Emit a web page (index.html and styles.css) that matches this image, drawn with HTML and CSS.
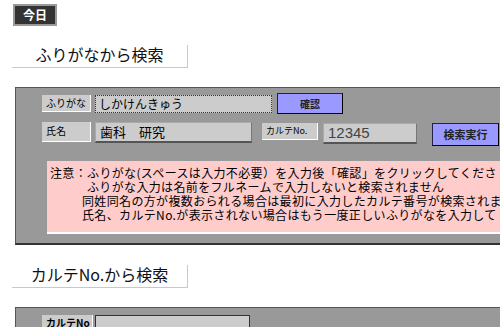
FILE: index.html
```html
<!DOCTYPE html>
<html lang="ja">
<head>
<meta charset="utf-8">
<link rel="stylesheet" href="styles.css">
</head>
<body>
<div class="today">今日</div>

<div class="section-head">ふりがなから検索</div>

<div class="panel">
  <div class="row row1">
    <div class="label l-kana">ふりがな</div>
    <div class="input in-kana">しかけんきゅう</div>
    <div class="btn btn-confirm">確認</div>
  </div>
  <div class="row row2">
    <div class="label l-name">氏名</div>
    <div class="input in-name">歯科　研究</div>
    <div class="label l-no">カルテNo.</div>
    <div class="input in-no">12345</div>
    <div class="btn btn-search">検索実行</div>
  </div>
  <div class="notice">
    <div class="nline">注意：ふりがな(スペースは入力不必要）を入力後「確認」をクリックしてくださ</div>
    <div class="nline ind2">ふりがな入力は名前をフルネームで入力しないと検索されません</div>
    <div class="nline ind">同姓同名の方が複数おられる場合は最初に入力したカルテ番号が検索されま</div>
    <div class="nline ind">氏名、カルテNo.が表示されない場合はもう一度正しいふりがなを入力して</div>
  </div>
</div>

<div class="section-head head2">カルテNo.から検索</div>

<div class="panel panel2">
  <div class="row">
    <div class="label l-no2">カルテNo</div>
    <div class="input in-no2"></div>
  </div>
</div>
</body>
</html>
```

FILE: styles.css
```css
html, body {
  margin: 0;
  padding: 0;
  overflow: hidden;
  background: #ffffff;
  font-family: "Noto Sans CJK JP", "Liberation Sans", sans-serif;
  color: #000;
}
body {
  width: 500px;
  height: 327px;
}
.today {
  margin: 4px 0 0 13px;
  width: 40px;
  height: 18px;
  background: #333333;
  border: 2px solid #999999;
  color: #ffffff;
  font-size: 12px;
  font-weight: bold;
  line-height: 18px;
  text-align: center;
  box-sizing: content-box;
}
.section-head {
  margin: 19px 0 0 12px;
  width: 175px;
  height: 22px;
  border-right: 1px solid #c8c8c8;
  border-bottom: 1px solid #c8c8c8;
  font-size: 16px;
  line-height: 18px;
  text-align: center;
  color: #111;
}
.panel {
  margin: 19px 0 0 15px;
  width: 458px;
  height: 150px;
  background: #999999;
  border-top: 1px solid #555555;
  border-left: 1px solid #555555;
  border-bottom: 2px solid #333333;
  padding: 5px 0 0 26px;
  box-sizing: content-box;
}
.row {
  display: flex;
  align-items: flex-start;
}
.label {
  background: #cccccc;
  border-bottom: 1px solid #ffffff;
  border-right: 1px solid #ffffff;
  font-size: 10px;
  padding-left: 4px;
  box-sizing: border-box;
}
.input {
  background: #cccccc;
  box-sizing: border-box;
  padding-left: 4px;
}
.row1 {
  height: 29px;
}
.l-kana {
  margin-top: 2px;
  width: 49px;
  height: 17px;
  line-height: 16px;
}
.in-kana {
  margin-top: 2px;
  margin-left: 4px;
  width: 177px;
  height: 18px;
  border: 1px dotted #333333;
  font-size: 12px;
  line-height: 16px;
  padding-left: 3px;
}
.btn {
  background: #9999ff;
  border: 1px solid #222244;
  border-right-color: #000;
  border-bottom-color: #000;
  box-sizing: border-box;
  text-align: center;
  font-size: 11px;
  font-weight: bold;
  color: #222;
}
.btn-confirm {
  margin-left: 5px;
  width: 66px;
  height: 21px;
  line-height: 19px;
  font-size: 10px;
}
.row2 {
  height: 24px;
}
.l-name {
  width: 49px;
  height: 20px;
  line-height: 18px;
}
.in-name {
  margin-left: 4px;
  width: 157px;
  height: 21px;
  border-top: 1px solid #aaaaaa;
  border-left: 1px solid #aaaaaa;
  border-bottom: 2px solid #555555;
  border-right: 1px solid #777777;
  font-size: 13px;
  line-height: 18px;
}
.l-no {
  margin-left: 10px;
  margin-top: 1px;
  width: 56px;
  height: 17px;
  line-height: 16px;
  font-size: 9px;
}
.in-no {
  margin-left: 5px;
  margin-top: 1px;
  width: 94px;
  height: 21px;
  border-top: 1px solid #aaaaaa;
  border-left: 1px solid #aaaaaa;
  border-bottom: 2px solid #555555;
  border-right: 1px solid #777777;
  font-family: "Liberation Sans", sans-serif;
  font-size: 15px;
  line-height: 18px;
  color: #444;
}
.btn-search {
  margin-left: 15px;
  margin-top: 1px;
  width: 67px;
  height: 23px;
  line-height: 21px;
  font-size: 11px;
}
.notice {
  margin: 15px 0 0 5px;
  width: 453px;
  height: 73px;
  background: #ffcccc;
  border-bottom: 2px solid #ffffff;
  padding: 5px 0 0 3px;
  box-sizing: border-box;
  font-size: 12px;
  line-height: 14px;
  letter-spacing: 0.35px;
  white-space: nowrap;
  overflow: hidden;
}
.nline {
  height: 14px;
}
.nline.ind2 {
  padding-left: 37px;
}
.nline.ind {
  padding-left: 32px;
}
.head2 {
  margin-top: 20px;
}
.panel2 {
  margin-top: 19px;
  height: 40px;
  padding-top: 7px;
}
.l-no2 {
  width: 51px;
  height: 17px;
  line-height: 16px;
  font-size: 10px;
  font-weight: bold;
}
.in-no2 {
  margin-left: 2px;
  width: 155px;
  height: 20px;
  border: 1px solid #333333;
}
```
